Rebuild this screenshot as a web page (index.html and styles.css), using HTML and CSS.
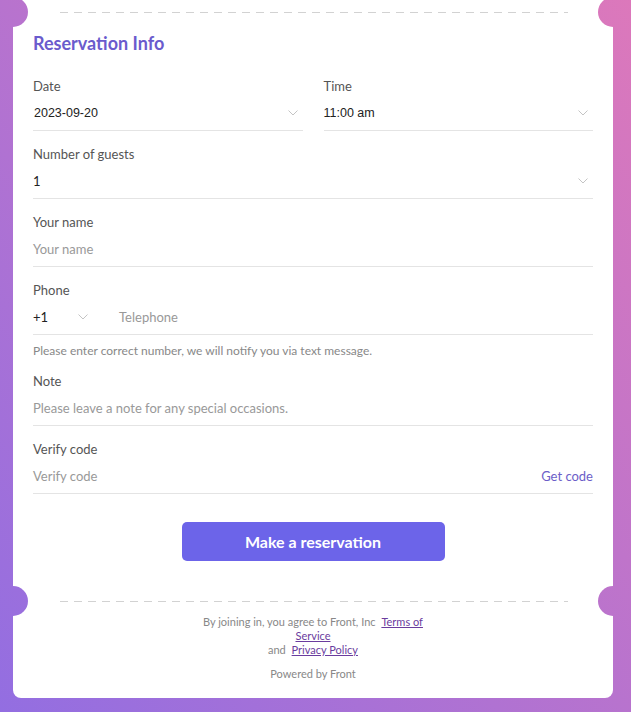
FILE: index.html
```html
<!DOCTYPE html>
<html lang="en">
<head>
<meta charset="utf-8">
<title>Reservation Info</title>
<link rel="stylesheet" href="styles.css">
</head>
<body>
<div class="card">
  <div class="divider divider-top"></div>
  <h2 class="title">Reservation Info</h2>

  <div class="row">
    <div class="field">
      <div class="label">Date</div>
      <div class="input">
        <span class="value value-native">2023-09-20</span>
        <svg class="chev" width="10" height="6" viewBox="0 0 10 6"><polyline points="0.5,0.5 5,5 9.5,0.5" fill="none" stroke="#c4c4c4" stroke-width="1"/></svg>
      </div>
    </div>
    <div class="field">
      <div class="label">Time</div>
      <div class="input">
        <span class="value value-native">11:00 am</span>
        <svg class="chev" width="10" height="6" viewBox="0 0 10 6"><polyline points="0.5,0.5 5,5 9.5,0.5" fill="none" stroke="#c4c4c4" stroke-width="1"/></svg>
      </div>
    </div>
  </div>

  <div class="field">
    <div class="label">Number of guests</div>
    <div class="input">
      <span class="value">1</span>
      <svg class="chev" width="10" height="6" viewBox="0 0 10 6"><polyline points="0.5,0.5 5,5 9.5,0.5" fill="none" stroke="#c4c4c4" stroke-width="1"/></svg>
    </div>
  </div>

  <div class="field">
    <div class="label">Your name</div>
    <div class="input">
      <span class="placeholder">Your name</span>
    </div>
  </div>

  <div class="field">
    <div class="label">Phone</div>
    <div class="input input-phone">
      <div class="cc">
        <span class="value">+1</span>
        <svg class="chev" width="10" height="6" viewBox="0 0 10 6"><polyline points="0.5,0.5 5,5 9.5,0.5" fill="none" stroke="#c4c4c4" stroke-width="1"/></svg>
      </div>
      <span class="placeholder">Telephone</span>
    </div>
    <div class="help">Please enter correct number, we will notify you via text message.</div>
  </div>

  <div class="field">
    <div class="label">Note</div>
    <div class="input">
      <span class="placeholder">Please leave a note for any special occasions.</span>
    </div>
  </div>

  <div class="field field-last">
    <div class="label">Verify code</div>
    <div class="input">
      <span class="placeholder">Verify code</span>
      <span class="getcode">Get code</span>
    </div>
  </div>

  <div class="actions">
    <button class="btn">Make a reservation</button>
  </div>

  <div class="divider divider-bottom"></div>

  <div class="terms">
    <div class="terms-line">By joining in, you agree to Front, Inc <a class="spaced" href="#">Terms of</a></div>
    <div class="terms-line"><a href="#">Service</a></div>
    <div class="terms-line">and <a class="spaced" href="#">Privacy Policy</a></div>
  </div>
  <p class="powered">Powered by Front</p>
</div>
</body>
</html>
```

FILE: styles.css
```css
html, body {
  margin: 0;
  padding: 0;
}
body {
  height: 712px;
  overflow: hidden;
  background: linear-gradient(to top right, #936ee1, #dc78bb) fixed;
  font-family: Lato, "Noto Sans", sans-serif;
  color: #333;
}
.card {
  margin: 0 18px 0 13px;
  background: #fff;
  border-radius: 0 0 8px 8px;
  padding: 12px 20px 17px;
  height: 669px;
}
.divider {
  position: relative;
  height: 1px;
  margin: 0 25px 0 27px;
  background: repeating-linear-gradient(to right, #d2d2d2 0 8px, transparent 8px 14px);
}
.divider::before,
.divider::after {
  content: "";
  position: absolute;
  top: -15px;
  width: 30px;
  height: 30px;
  border-radius: 50%;
  background: linear-gradient(to top right, #936ee1, #dc78bb) fixed;
}
.divider::before { left: -62px; }
.divider::after { right: -60px; }
.title {
  margin: 18px 0 21px;
  font-size: 18px;
  line-height: 24px;
  font-weight: 700;
  color: #6a5bcd;
}
.row {
  display: grid;
  grid-template-columns: 1fr 1fr;
  column-gap: 21px;
}
.field {
  margin-bottom: 13px;
}
.field-last { margin-bottom: 0; }
.label {
  font-size: 13px;
  line-height: 20px;
  color: #555;
}
.input {
  height: 34px;
  border-bottom: 1px solid #e4e4e4;
  display: flex;
  align-items: center;
  justify-content: space-between;
  padding-right: 5px;
  font-size: 13px;
}
.value { color: #222; }
.value-native {
  font-family: "Liberation Sans", Arial, sans-serif;
  font-size: 12.5px;
}
.row .field:first-child .value-native { padding-left: 1px; }
.placeholder { color: #999; }
.chev { display: block; flex: none; }
.input-phone { justify-content: flex-start; }
.cc {
  width: 86px;
  display: flex;
  align-items: center;
  gap: 30px;
}
.help {
  margin-top: 8px;
  font-size: 12px;
  line-height: 15px;
  color: #888;
}
.getcode {
  color: #6b5ec8;
  margin-right: -5px;
}
.actions {
  display: flex;
  justify-content: center;
  margin-top: 28px;
}
.btn {
  width: 263px;
  height: 39px;
  border: none;
  border-radius: 5px;
  background: #6c64e9;
  color: #fff;
  font-family: inherit;
  font-size: 16px;
  font-weight: 700;
}
.divider-bottom { margin-top: 40px; }
.terms {
  margin: 13px auto 0;
  text-align: center;
  font-size: 11px;
  line-height: 14px;
  color: #888;
}
.terms a {
  color: #6a3c9e;
  text-decoration: underline;
}
.terms a.spaced { margin-left: 3px; }
.powered {
  margin: 10px 0 0;
  text-align: center;
  font-size: 11px;
  line-height: 14px;
  color: #888;
}
```
